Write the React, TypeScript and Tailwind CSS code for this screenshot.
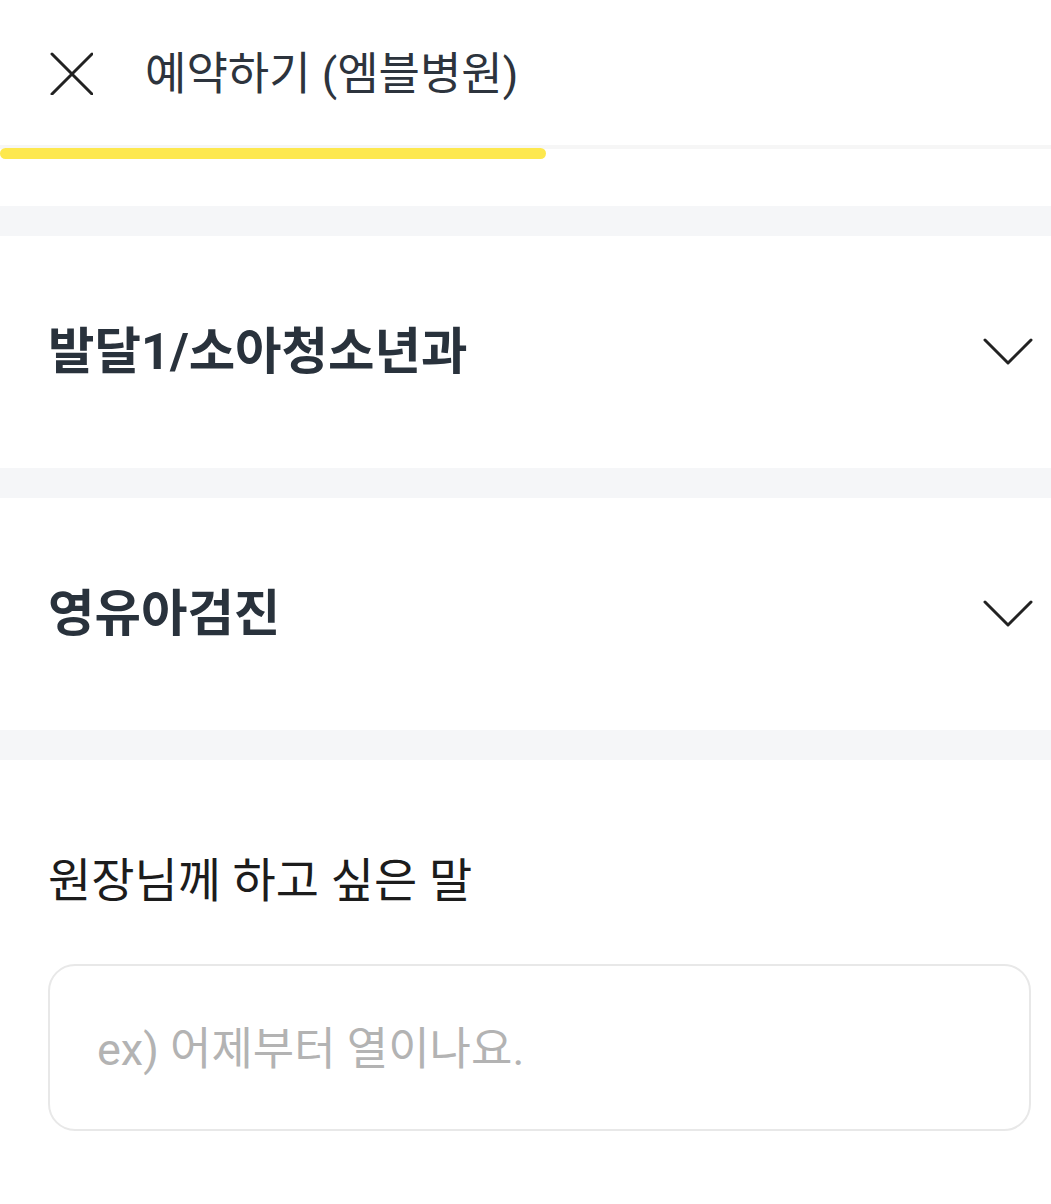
const sections = ["발달1/소아청소년과", "영유아검진"];

function CloseIcon() {
  return (
    <svg width="44" height="44" viewBox="0 0 44 44" fill="none" stroke="#222222" strokeWidth="3" strokeLinecap="round">
      <path d="M3 3L43 43M43 3L3 43" />
    </svg>
  );
}

function ChevronDown() {
  return (
    <svg width="50" height="28" viewBox="0 0 50 28" fill="none" stroke="#222222" strokeWidth="3" strokeLinecap="round" strokeLinejoin="round">
      <path d="M2 2L25 25L48 2" />
    </svg>
  );
}

function SectionRow({ title }: { title: string }) {
  return (
    <button className="flex h-[232px] w-full items-center justify-between pl-[48px] pr-[18px] text-left">
      <span className="text-[50.5px] font-bold leading-none text-[#29323c]">{title}</span>
      <ChevronDown />
    </button>
  );
}

export default function App() {
  return (
    <div className="min-h-[1204px] w-[1051px] bg-white font-['Roboto','Noto_Sans_CJK_KR',sans-serif]">
      <header className="flex h-[145px] items-center">
        <div className="ml-[49px] flex h-[44px] w-[44px] items-center justify-center">
          <CloseIcon />
        </div>
        <h1 className="ml-[52px] mt-[4px] text-[45px] font-normal leading-none text-[#2d343d]">
          예약하기 (엠블병원)
        </h1>
      </header>

      <div className="relative h-[14px]">
        <div className="h-[4px] w-full bg-[#f6f6f6]" />
        <div className="absolute left-0 top-[3px] h-[11px] w-[546px] rounded-full bg-[#fde84e]" />
      </div>

      <div className="mt-[47px] h-[30px] bg-[#f5f6f8]" />
      <SectionRow title={sections[0]} />
      <div className="h-[30px] bg-[#f5f6f8]" />
      <SectionRow title={sections[1]} />
      <div className="h-[30px] bg-[#f5f6f8]" />

      <div className="pl-[48px] pr-[20px] pt-[97px]">
        <p className="text-[47px] leading-none text-[#1c1c1c]">원장님께 하고 싶은 말</p>
        <div className="mt-[60px] flex h-[167px] items-center rounded-[27px] border-2 border-[#e8e8e8] px-[47px]">
          <span className="mt-[4px] text-[45px] leading-none text-[#b3b3b3]">ex) 어제부터 열이나요.</span>
        </div>
      </div>
    </div>
  );
}
